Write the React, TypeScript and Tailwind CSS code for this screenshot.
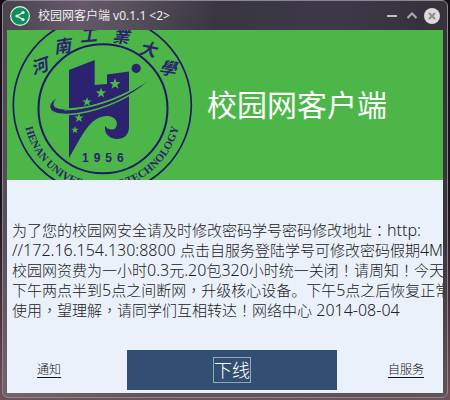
import React from "react";

const notice = [
  "为了您的校园网安全请及时修改密码学号密码修改地址：http:",
  "//172.16.154.130:8800 点击自服务登陆学号可修改密码假期4M",
  "校园网资费为一小时0.3元.20包320小时统一关闭！请周知！今天",
  "下午两点半到5点之间断网，升级核心设备。下午5点之后恢复正常",
  "使用，望理解，请同学们互相转达！网络中心 2014-08-04",
];

const sealCharacters = [
  { char: "河", x: 39, y: 65, angle: -18 },
  { char: "南", x: 62, y: 45, angle: -8 },
  { char: "工", x: 88, y: 34, angle: -5 },
  { char: "業", x: 121, y: 35, angle: 4 },
  { char: "大", x: 148, y: 48, angle: 12 },
  { char: "學", x: 168, y: 67, angle: 8 },
];

const stars = [
  { x: 115, y: 84, r: 6 },
  { x: 101, y: 93, r: 5.5 },
  { x: 87, y: 102, r: 5 },
  { x: 79, y: 118, r: 5 },
  { x: 75, y: 130, r: 4 },
];

function starPoints(x: number, y: number, r: number) {
  return Array.from({ length: 10 }, (_, i) => {
    const radius = i % 2 === 0 ? r : r * 0.4;
    const a = (Math.PI / 5) * i - Math.PI / 2;
    return `${x + radius * Math.cos(a)},${y + radius * Math.sin(a)}`;
  }).join(" ");
}

function Seal() {
  return (
    <svg
      className="h-[150px] w-[188px] shrink-0"
      viewBox="7 30 188 150"
      role="img"
      aria-label="Henan University of Technology"
    >
      <g fill="none" stroke="#1f1a66">
        <circle cx="102.3" cy="105" r="89" strokeWidth="1.7" />
        <circle cx="103" cy="108.8" r="64.5" strokeWidth="2" />
      </g>
      <g fill="#2c2270">
        <path d="M69 70 L94.7 60 V85 L107 84 V74.500 L129 71.500 V127 C129 135 124 139 117 139 C110 139 104 134 105 126 C108 130 113 130.500 115.500 128 C119 123 116 116 107 116 C90 116 82 136 69 158 Z" />
        <circle cx="136.200" cy="68.300" r="4.600" />
      </g>
      <path
        d="M68 93 C57 95 49 102 49.500 107 C51 116 70 116 88 111.500 C114 106 141 91 154.500 75 C141 86 122 98 97 104.500 C76 110 55 111 54 104.500 C54 100 60 96 68 93 Z"
        fill="#2c2270"
        stroke="#4db648"
        strokeWidth="1.400"
      />
      <path
        d="M64 110 C88 110 122 98 148 80"
        fill="none"
        stroke="#4db648"
        strokeWidth="1"
      />
      <g fill="#4db648">
        {stars.map((s) => (
          <polygon key={s.y} points={starPoints(s.x, s.y, s.r)} />
        ))}
      </g>
      <g fill="#2c2270">
        <text
          x="82"
          y="162"
          className="font-['Liberation_Sans',sans-serif] text-[12px] font-bold tracking-[5px]"
        >
          1956
        </text>
        {sealCharacters.map((c) => (
          <text
            key={c.char}
            x={c.x}
            y={c.y}
            textAnchor="middle"
            dominantBaseline="central"
            transform={`rotate(${c.angle} ${c.x} ${c.y})`}
            className="font-['Noto_Sans_CJK_TC',sans-serif] text-[17px] font-bold italic"
          >
            {c.char}
          </text>
        ))}
        <path id="seal-arc" fill="none" d="M 23 108 A 79 81 0 0 0 181 108" />
        <text
          textAnchor="middle"
          className="font-['Liberation_Serif',serif] text-[11px] font-bold"
        >
          <textPath href="#seal-arc" startOffset="50%">
            HENAN UNIVERSITY OF TECHNOLOGY
          </textPath>
        </text>
      </g>
    </svg>
  );
}

function TitleBar() {
  return (
    <header className="flex h-[29px] items-center px-[3px]">
      <svg className="size-5 shrink-0" viewBox="0 0 20 20" aria-hidden="true">
        <circle cx="10" cy="10" r="10" fill="#e8eeeb" />
        <circle cx="10" cy="10" r="8.800" fill="#0c8f5b" />
        <path d="M13 6.500 L7 10 L13 13.500" fill="none" stroke="#e8f3ee" strokeWidth="1.300" />
        <g fill="#e8f3ee">
          <circle cx="13" cy="6.500" r="1.600" />
          <circle cx="7" cy="10" r="1.600" />
          <circle cx="13" cy="13.500" r="1.600" />
        </g>
      </svg>
      <h1 className="ml-2 flex-1 truncate text-[12px] leading-5 text-[#eeeeee]">
        校园网客户端 v0.1.1 &lt;2&gt;
      </h1>
      <div className="flex items-center gap-1">
        <button type="button" aria-label="Minimize" className="size-4">
          <svg viewBox="0 0 16 16" fill="none" stroke="#bdbcc0" strokeWidth="2">
            <path d="M3 8 H13" />
          </svg>
        </button>
        <button type="button" aria-label="Maximize" className="size-4">
          <svg viewBox="0 0 16 16" fill="none" stroke="#aaa9ad" strokeWidth="2">
            <path d="M3.500 10 L8 5.500 L12.500 10" />
          </svg>
        </button>
        <button type="button" aria-label="Close" className="size-4">
          <svg viewBox="0 0 16 16">
            <circle cx="8" cy="8" r="8" fill="#dcdbdc" />
            <path d="M5 5 L11 11 M11 5 L5 11" stroke="#929194" strokeWidth="2.400" />
          </svg>
        </button>
      </div>
    </header>
  );
}

// Latin runs are one size larger than the Chinese text, and full-width
// commas, colons and exclamation marks sit in the middle of their cell.
function NoticeLine({ text }: { text: string }) {
  return (
    <p className="h-5 whitespace-nowrap">
      {text.split(/([\x20-\x7e]+|[，：！])/).map((run, i) => {
        if (i % 2 === 0) return run;
        return /[，：！]/.test(run) ? (
          <span key={i} className="font-['Noto_Sans_CJK_TC',sans-serif]">
            {run}
          </span>
        ) : (
          <span key={i} className="text-[16px]">
            {run}
          </span>
        );
      })}
    </p>
  );
}

export default function App() {
  return (
    <div className="min-h-screen bg-linear-to-b from-[#141018] via-[#1a131c] to-[#70515a] px-[2px] pb-[2px] font-['Noto_Sans','Noto_Sans_CJK_SC',sans-serif]">
      <div className="rounded-md border border-[#8b878c] bg-[linear-gradient(to_top,#7d686b99_0%,transparent_40%),linear-gradient(100deg,#49434d_0%,#65586b_15%,#57505b_25%,#393642_42%,#3d3949_65%,#36323d_82%,#38363a_100%)] px-1 pb-1">
        <TitleBar />
        <main className="overflow-hidden bg-[#eaf1fa]">
          <section className="flex h-[150px] items-center bg-[#4db648]">
            <Seal />
            <h2 className="ml-3 whitespace-nowrap text-[30px] leading-10 text-white">
              校园网客户端
            </h2>
          </section>
          <section className="mt-10 pl-[5px] text-[15px] font-light leading-5 text-[#222222]">
            {notice.map((line) => (
              <NoticeLine key={line} text={line} />
            ))}
          </section>
          <nav className="mt-[30px] grid grid-cols-[120px_210px_1fr] items-center pb-[3px] text-[12px] font-light text-[#111111]">
            <a href="#notice" className="pl-[30px] underline underline-offset-[3px]">
              通知
            </a>
            <button
              type="button"
              className="flex h-10 items-center justify-center bg-[#324f73] text-[18px] font-light text-white"
            >
              <span className="border border-[#8fa9bb] leading-6">下线</span>
            </button>
            <a href="#self-service" className="pr-[19px] text-right underline underline-offset-[3px]">
              自服务
            </a>
          </nav>
        </main>
      </div>
    </div>
  );
}
